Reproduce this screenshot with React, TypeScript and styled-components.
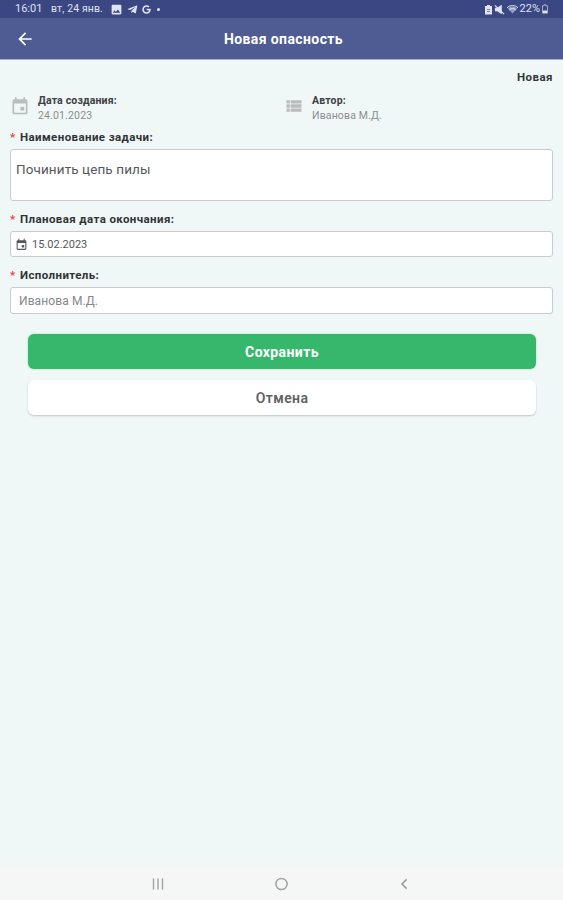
import React from 'react'
import styled, { createGlobalStyle } from 'styled-components'
import { MdArrowBack, MdImage, MdViewList } from 'react-icons/md'
import { FaGoogle, FaTelegramPlane } from 'react-icons/fa'

const GlobalStyle = createGlobalStyle`
  * {
    box-sizing: border-box;
  }

  body {
    margin: 0;
    font-family: Roboto, 'Noto Sans', sans-serif;
  }
`

const Screen = styled.div`
  display: flex;
  flex-direction: column;
  height: 900px;
  background: #f0f7f7;
  overflow: hidden;
`

const StatusBar = styled.div`
  display: flex;
  justify-content: space-between;
  flex: none;
  height: 18px;
  padding: 0 14px 0 15px;
  background: #3a4783;
  color: #dfe3f3;
  font-size: 11px;
  line-height: 18px;
`

const StatusGroup = styled.div<{ $gap: number }>`
  display: flex;
  align-items: center;
  gap: ${({ $gap }) => $gap}px;
  white-space: nowrap;
`

const Clock = styled.span`
  width: 32px;
  font-size: 11px;
`

const StatusDate = styled.span`
  width: 55px;
  font-size: 10.5px;
  letter-spacing: 0.12px;
`

const Dot = styled.span`
  width: 3px;
  height: 3px;
  margin-left: 2px;
  border-radius: 50%;
  background: #dfe3f3;
`

const Header = styled.header`
  display: grid;
  grid-template-columns: 34px 1fr 34px;
  align-items: center;
  flex: none;
  height: 42px;
  padding: 0 14px 0 15px;
  background: #4e5c93;
  border-bottom: 1px solid #a9b0cc;
  color: #ffffff;
`

const HeaderTitle = styled.h1`
  margin: 0;
  padding: 1px 0 0 3px;
  font-size: 14px;
  font-weight: 700;
  line-height: 18px;
  letter-spacing: 0.4px;
  text-align: center;
`

const Content = styled.main`
  display: flex;
  flex: 1;
  flex-direction: column;
  padding: 9px 10px 0;
`

const State = styled.div`
  height: 24px;
  font-size: 11.5px;
  font-weight: 700;
  line-height: 16px;
  letter-spacing: 0.45px;
  text-align: right;
  color: #333638;
`

const InfoRow = styled.div`
  display: grid;
  grid-template-columns: 274px 1fr;
  height: 37px;
`

const Info = styled.div`
  display: flex;
  gap: 8px;

  svg {
    margin-top: 3px;
    color: #b9bcbc;
  }
`

const InfoTitle = styled.div`
  font-size: 10.5px;
  font-weight: 700;
  line-height: 15px;
  letter-spacing: 0.16px;
  color: #3d4042;
`

const InfoValue = styled.div`
  font-size: 10.5px;
  line-height: 15px;
  letter-spacing: 0.15px;
  color: #8b8e90;
`

const Label = styled.label`
  display: block;
  height: 19px;
  font-size: 11.5px;
  font-weight: 700;
  line-height: 15px;
  letter-spacing: 0.4px;
  color: #303335;
`

const Required = styled.span`
  display: inline-block;
  width: 10px;
  color: #e0434f;
`

const Field = styled.div<{ $height: number; $gap: number }>`
  display: flex;
  align-items: center;
  gap: 4px;
  height: ${({ $height }) => $height}px;
  margin-bottom: ${({ $gap }) => $gap}px;
  padding: 0 4px;
  background: #ffffff;
  border: 1px solid #c9cbcd;
  border-radius: 3px;
  font-size: 11px;
  color: #55585a;
`

const TaskField = styled(Field)`
  align-items: flex-start;
  padding: 10px 5px;
  font-size: 13.5px;
  line-height: 18px;
  letter-spacing: 0.1px;
`

const PersonField = styled(Field)`
  padding: 1px 8px 0;
  font-size: 12px;
  letter-spacing: 0.1px;
  color: #858789;
`

const Actions = styled.div`
  display: flex;
  flex-direction: column;
  gap: 11px;
  padding: 0 17px 0 18px;
`

const Button = styled.button<{ $primary?: boolean }>`
  height: 35px;
  padding: 0;
  border: none;
  border-radius: 6px;
  background: ${({ $primary }) => ($primary ? '#35b86b' : '#ffffff')};
  box-shadow: ${({ $primary }) =>
    $primary ? '0 0 2px rgba(53, 184, 107, 0.5)' : '0 1px 2px rgba(0, 0, 0, 0.2)'};
  color: ${({ $primary }) => ($primary ? '#ffffff' : '#5f6163')};
  font-family: inherit;
  font-size: 14px;
  font-weight: ${({ $primary }) => ($primary ? 700 : 600)};
  letter-spacing: 0.4px;
`

const NavBar = styled.nav`
  display: flex;
  align-items: center;
  justify-content: space-between;
  flex: none;
  height: 34px;
  padding: 2px 155px 0 152px;
  background: #f5f6f6;
`

const CalendarIcon = ({ size }: { size: number }) => (
  <svg width={size} height={size} viewBox="0 0 24 24" fill="currentColor">
    <path d="M6 1.5h2V4h8V1.5h2V4h1a2 2 0 0 1 2 2v14a2 2 0 0 1-2 2H5a2 2 0 0 1-2-2V6a2 2 0 0 1 2-2h1zM5 9v11h14V9z" />
    <path d="M12.5 13h4.5v4.5h-4.5z" />
  </svg>
)

const MutedIcon = () => (
  <svg width="11" height="11" viewBox="0 0 12 12">
    <path d="M1 4h2.5L8.5 0.8v10.4L3.5 8H1z" fill="currentColor" />
    <path d="M1 1.5l10 9.5" stroke="currentColor" strokeWidth="1.3" />
  </svg>
)

const BatterySaverIcon = () => (
  <svg width="9" height="11" viewBox="0 0 9 11">
    <path d="M3 1h3v1h2v8.5H1V2h2z" fill="currentColor" />
    <path d="M3 5.5h3M3 7.5h3" stroke="#3a4783" strokeWidth="0.6" />
  </svg>
)

const WifiIcon = () => (
  <svg width="13" height="11" viewBox="0 0 13 11">
    <path d="M1.8 4.4a6.8 6.8 0 0 1 9.4 0L6.5 9.6z" fill="currentColor" opacity="0.55" />
    <path d="M1 3.7a8 8 0 0 1 11 0M3.2 6a4.8 4.8 0 0 1 6.6 0" fill="none" stroke="currentColor" strokeWidth="1" />
  </svg>
)

const BatteryIcon = () => (
  <svg width="8" height="10" viewBox="0 0 8 10">
    <path d="M3 0.8h2v1h1.5v7.4h-5V1.8H3z" fill="none" stroke="currentColor" strokeWidth="0.8" opacity="0.8" />
    <path d="M2 6.5h4V9H2z" fill="currentColor" />
  </svg>
)

export default function App() {
  return (
    <>
      <GlobalStyle />
      <Screen>
        <StatusBar>
          <StatusGroup $gap={4}>
            <Clock>16:01</Clock>
            <StatusDate>вт, 24 янв.</StatusDate>
            <MdImage size={13} />
            <FaTelegramPlane size={11} />
            <FaGoogle size={9} />
            <Dot />
          </StatusGroup>
          <StatusGroup $gap={1}>
            <BatterySaverIcon />
            <MutedIcon />
            <WifiIcon />
            <span>22%</span>
            <BatteryIcon />
          </StatusGroup>
        </StatusBar>

        <Header>
          <MdArrowBack size={20} />
          <HeaderTitle>Новая опасность</HeaderTitle>
        </Header>

        <Content>
          <State>Новая</State>

          <InfoRow>
            <Info>
              <CalendarIcon size={20} />
              <div>
                <InfoTitle>Дата создания:</InfoTitle>
                <InfoValue>24.01.2023</InfoValue>
              </div>
            </Info>
            <Info>
              <MdViewList size={20} />
              <div>
                <InfoTitle>Автор:</InfoTitle>
                <InfoValue>Иванова М.Д.</InfoValue>
              </div>
            </Info>
          </InfoRow>

          <Label>
            <Required>*</Required>Наименование задачи:
          </Label>
          <TaskField $height={52} $gap={11}>Починить цепь пилы</TaskField>

          <Label>
            <Required>*</Required>Плановая дата окончания:
          </Label>
          <Field $height={26} $gap={11}>
            <CalendarIcon size={13} />
            15.02.2023
          </Field>

          <Label>
            <Required>*</Required>Исполнитель:
          </Label>
          <PersonField $height={27} $gap={20}>Иванова М.Д.</PersonField>

          <Actions>
            <Button $primary>Сохранить</Button>
            <Button>Отмена</Button>
          </Actions>
        </Content>

        <NavBar>
          <svg width="12" height="12" viewBox="0 0 12 12" stroke="#a2a3a3" strokeWidth="1.4">
            <path d="M1.5 0.5v11M6 0.5v11M10.5 0.5v11" />
          </svg>
          <svg width="14" height="14" viewBox="0 0 14 14" fill="none" stroke="#a2a3a3" strokeWidth="1.5">
            <circle cx="6.5" cy="7" r="5.6" />
          </svg>
          <svg width="8" height="12" viewBox="0 0 8 12" fill="none" stroke="#999a9a" strokeWidth="1.5">
            <path d="M6.6 1.4L2 6l4.6 4.6" />
          </svg>
        </NavBar>
      </Screen>
    </>
  )
}
